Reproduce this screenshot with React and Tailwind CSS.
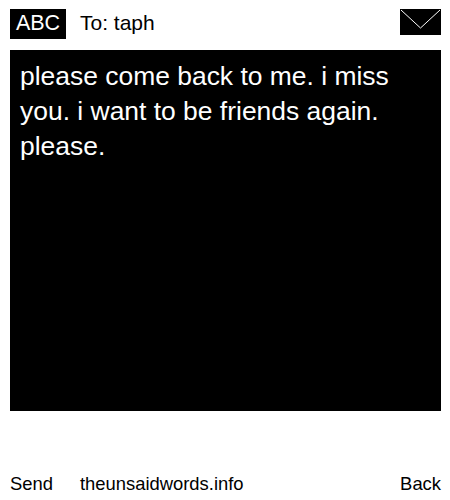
export default function App() {
  return (
    <div className="w-[450px] h-[500px] bg-white text-black flex flex-col font-['Liberation_Sans',Arial,sans-serif] overflow-hidden">
      <div className="h-[50px] pl-[10px] pr-[9px] pt-[9px] flex items-start">
        <div className="w-[56px] h-[30px] bg-black text-white text-[21.5px] leading-[29px] text-center">ABC</div>
        <div className="ml-[14px] text-[21px] leading-[28px]">To: taph</div>
        <svg className="ml-auto w-[41px] h-[26px]" viewBox="0 0 41 26">
          <rect width="41" height="26" fill="#000" />
          <path d="M1 1 L20.5 19 L40 1" fill="none" stroke="#fff" strokeWidth="1" />
        </svg>
      </div>
      <div className="ml-[10px] mr-[9px] h-[361px] bg-black text-white text-[26.45px] leading-[35px] px-[10px] py-[9px]">
        please come back to me. i miss you. i want to be friends again. please.
      </div>
      <div className="flex-1 flex items-end justify-between pl-[10px] pr-[9px] pb-[5px] text-[18.4px] leading-[22px]">
        <div className="flex">
          <span>Send</span>
          <span className="ml-[27px]">theunsaidwords.info</span>
        </div>
        <span>Back</span>
      </div>
    </div>
  );
}
